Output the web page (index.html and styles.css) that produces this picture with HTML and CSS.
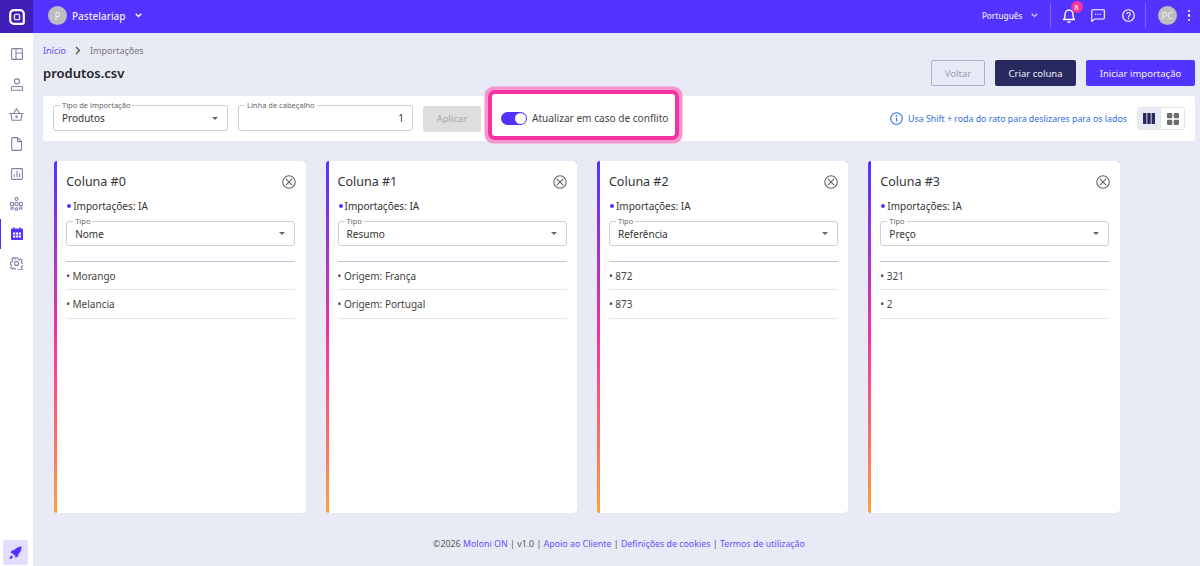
FILE: index.html
```html
<!DOCTYPE html>
<html lang="pt">
<head>
  <meta charset="UTF-8">
  <title>Importações - produtos.csv</title>
  <link rel="stylesheet" href="styles.css">
</head>
<body>
  <header class="topbar">
    <div class="logo">
      <svg width="16" height="16" viewBox="0 0 16 16" fill="none"><path d="M5 1.200h6A3.800 3.800 0 0 1 14.800 5v8.500a1.300 1.300 0 0 1-1.300 1.300H5A3.800 3.800 0 0 1 1.200 11V5A3.800 3.800 0 0 1 5 1.200z" stroke="#fff" stroke-width="2.200"/><rect x="5.400" y="5.400" width="5.200" height="5.200" rx="1.200" stroke="#e8e4ff" stroke-width="1.400"/></svg>
    </div>
    <div class="company">
      <span class="avatar">P</span>
      <span class="company-name">Pastelariap</span>
      <svg class="chev" width="7" height="5" viewBox="0 0 10 7" fill="none"><path d="M1 1l4 4 4-4" stroke="#fff" stroke-width="1.800"/></svg>
    </div>
    <div class="top-right">
      <span class="lang">Português</span>
      <svg class="chev lang-chev" width="7" height="5" viewBox="0 0 10 7" fill="none"><path d="M1 1l4 4 4-4" stroke="#e4dfff" stroke-width="1.600"/></svg>
      <span class="sep"></span>
      <span class="bell">
        <svg width="12" height="14" viewBox="2 3 12 14" fill="none" stroke="#fff" stroke-width="1.400"><path d="M2.800 13.500c1-1.200 1.200-2 1.200-4.500 0-2.800 1.700-5 4-5s4 2.200 4 5c0 2.500.2 3.300 1.200 4.500z"/><path d="M6.500 15.500c.5 1 2.500 1 3 0"/></svg>
        <span class="badge">8</span>
      </span>
      <svg class="msg" width="14" height="13" viewBox="0 0 15 14" fill="none"><path d="M1.700 .8h11.600a1 1 0 0 1 1 1v8a1 1 0 0 1-1 1H4L.8 13.300V1.800a1 1 0 0 1 .9-1z" stroke="#fff" stroke-width="1.200"/><path d="M4.500 5.800h1M7 5.800h1M9.500 5.800h1" stroke="#fff" stroke-width="1.200"/></svg>
      <svg class="help" width="13" height="13" viewBox="0 0 14 14" fill="none"><circle cx="7" cy="7" r="6.200" stroke="#fff" stroke-width="1.300"/><path d="M5.200 5.500C5.300 4.400 6 3.800 7 3.800s1.900.7 1.900 1.700c0 1.400-1.900 1.500-1.900 3" stroke="#fff" stroke-width="1.200"/><circle cx="7" cy="10.300" r=".8" fill="#fff"/></svg>
      <span class="sep sep-2"></span>
      <span class="avatar avatar-user">PC</span>
      <span class="dots"><i></i><i></i><i></i></span>
    </div>
  </header>

  <div class="shell">
    <nav class="sidebar">
      <div class="nav-list">
        <a class="nav-item"><svg width="12" height="12" viewBox="0 0 12 12" fill="none" stroke="#7d82ad" stroke-width="1.100"><rect x=".6" y=".6" width="10.800" height="10.800" rx="1"/><path d="M5 .6v10.800M5 5h6.400"/></svg></a>
        <a class="nav-item"><svg width="12" height="13" viewBox="0 0 12 13" fill="none" stroke="#7d82ad" stroke-width="1.100"><circle cx="6" cy="3.400" r="2.500"/><path d="M1.500 8.500h9a1 1 0 0 1 1 1v2.700H.5V9.500a1 1 0 0 1 1-1z"/></svg></a>
        <a class="nav-item"><svg width="15" height="13" viewBox="0 0 15 13" fill="none" stroke="#7d82ad" stroke-width="1.100"><path d="M.5 5.500h14M2 5.500l1 6.800h9l1-6.800M4.500 5.500L7.500.8l3 4.700"/><circle cx="7.500" cy="8.800" r=".7" fill="#7d82ad"/></svg></a>
        <a class="nav-item"><svg width="11" height="14" viewBox="0 0 11 14" fill="none" stroke="#7d82ad" stroke-width="1.100"><path d="M1.500.6h5l4 4v8a.8.8 0 0 1-.8.8H1.500a.8.8 0 0 1-.8-.8V1.400a.8.8 0 0 1 .8-.8zM6.500.6v4h4"/></svg></a>
        <a class="nav-item"><svg width="12" height="12" viewBox="0 0 12 12" fill="none" stroke="#7d82ad" stroke-width="1.100"><rect x=".6" y=".6" width="10.800" height="10.800" rx=".8"/><path d="M3.300 9V6.500M6 9V3M8.700 9V5.500"/></svg></a>
        <a class="nav-item"><svg width="13" height="14" viewBox="0 0 13 14" fill="none" stroke="#7d82ad" stroke-width="1.100"><circle cx="6.500" cy="2" r="1.500"/><rect x="5" y="5.500" width="3" height="3" rx=".8"/><rect x=".6" y="5.500" width="3" height="3" rx=".8"/><rect x="9.400" y="5.500" width="3" height="3" rx=".8"/><circle cx="2.200" cy="11" r="1.300"/><circle cx="6.500" cy="12" r="1.300"/><circle cx="10.800" cy="11" r="1.300"/></svg></a>
        <a class="nav-item nav-active"><svg width="12" height="13" viewBox="0 0 12 13"><path fill="#5233ff" d="M2.500 0h1v1.500h5V0h1v1.500H11a1 1 0 0 1 1 1V12a1 1 0 0 1-1 1H1a1 1 0 0 1-1-1V2.500a1 1 0 0 1 1-1h1.500z"/><path fill="#fff" d="M2 5.500h2.200v2H2zM4.900 5.500h2.200v2H4.900zM7.800 5.500H10v2H7.800zM2 8.500h2.200v2H2zM4.900 8.500h2.200v2H4.900zM7.800 8.500H10v2H7.800z"/></svg></a>
        <a class="nav-item"><svg width="13" height="13" viewBox="0 0 13 13" fill="none" stroke="#7d82ad" stroke-width="1.100"><path d="M5.400.7h2.200l.4 1.700 1.200.5 1.500-.9 1.500 1.500-.9 1.500.5 1.200 1.600.4v2.200l-1.600.4-.5 1.200.9 1.500-1.500 1.500-1.500-.9-1.200.5-.4 1.200H5.400L5 11.600l-1.200-.5-1.500.9L.8 10.500l.9-1.500-.5-1.200L.6 7.400V5.200l1.600-.4.5-1.200-.9-1.500 1.500-1.500 1.500.9L5 2z"/><circle cx="6.500" cy="6.400" r="2"/></svg></a>
      </div>
      <a class="rocket">
        <svg width="13" height="14" viewBox="0 0 13 14" fill="#5233ff"><path d="M12.500.5c.2 3.200-.8 5.700-3 7.500L9 10.500l-2.500 1.200-.3-1.700-3-2.700-1.700-.3L2.800 4.500 5.300 4C7.100 1.700 9.500.5 12.500.5z"/><path d="M2.500 9.500c-1 .4-1.700 1.500-2 3.500 2-.3 3-1 3.500-2z"/></svg>
      </a>
    </nav>

    <main class="content">
      <div class="crumbs">
        <a class="crumb-link">Início</a>
        <svg width="6" height="9" viewBox="0 0 6 9" fill="none"><path d="M1 1l3.500 3.500L1 8" stroke="#555" stroke-width="1.300"/></svg>
        <span>Importações</span>
      </div>

      <div class="title-row">
        <h1>produtos.csv</h1>
        <div class="actions">
          <button class="btn btn-back">Voltar</button>
          <button class="btn btn-dark">Criar coluna</button>
          <button class="btn btn-primary">Iniciar importação</button>
        </div>
      </div>

      <section class="toolbar">
        <div class="field field-type">
          <span class="field-label">Tipo de importação</span>
          <span class="field-value">Produtos</span>
          <span class="caret"></span>
        </div>
        <div class="field field-line">
          <span class="field-label">Linha de cabeçalho</span>
          <span class="field-value field-num">1</span>
        </div>
        <button class="btn btn-apply">Aplicar</button>
        <div class="conflict">
          <span class="toggle"><span class="knob"></span></span>
          <span>Atualizar em caso de conflito</span>
        </div>
        <div class="hint">
          <svg width="13" height="13" viewBox="0 0 13 13" fill="none"><circle cx="6.500" cy="6.500" r="5.800" stroke="#2f6fe0" stroke-width="1.100"/><path d="M6.500 5.800v3.600" stroke="#2f6fe0" stroke-width="1.200"/><circle cx="6.500" cy="3.900" r=".8" fill="#2f6fe0"/></svg>
          <span>Usa Shift + roda do rato para deslizares para os lados</span>
        </div>
        <div class="view-switch">
          <span class="view-btn view-on"><svg width="12" height="11" viewBox="0 0 12 11" fill="#27295f"><rect width="3.400" height="11" rx=".5"/><rect x="4.300" width="3.400" height="11" rx=".5"/><rect x="8.600" width="3.400" height="11" rx=".5"/></svg></span>
          <span class="view-btn"><svg width="12" height="12" viewBox="0 0 12 12" fill="#6c6c6c"><rect width="5.300" height="5.300" rx="1"/><rect x="6.700" width="5.300" height="5.300" rx="1"/><rect y="6.700" width="5.300" height="5.300" rx="1"/><rect x="6.700" y="6.700" width="5.300" height="5.300" rx="1"/></svg></span>
        </div>
      </section>

      <section class="columns">
        <article class="col-card">
          <div class="col-head"><h2>Coluna #0</h2><svg class="col-close" width="14" height="14" viewBox="0 0 14 14" fill="none" stroke="#666" stroke-width="1.100"><circle cx="7" cy="7" r="6.200"/><path d="M3.800 3.800l6.400 6.400M10.200 3.800l-6.400 6.400"/></svg></div>
          <div class="col-meta"><i class="dot"></i>Importações: IA</div>
          <div class="field field-col"><span class="field-label">Tipo</span><span class="field-value">Nome</span><span class="caret"></span></div>
          <ul class="rows"><li>• Morango</li><li>• Melancia</li></ul>
        </article>
        <article class="col-card">
          <div class="col-head"><h2>Coluna #1</h2><svg class="col-close" width="14" height="14" viewBox="0 0 14 14" fill="none" stroke="#666" stroke-width="1.100"><circle cx="7" cy="7" r="6.200"/><path d="M3.800 3.800l6.400 6.400M10.200 3.800l-6.400 6.400"/></svg></div>
          <div class="col-meta"><i class="dot"></i>Importações: IA</div>
          <div class="field field-col"><span class="field-label">Tipo</span><span class="field-value">Resumo</span><span class="caret"></span></div>
          <ul class="rows"><li>• Origem: França</li><li>• Origem: Portugal</li></ul>
        </article>
        <article class="col-card">
          <div class="col-head"><h2>Coluna #2</h2><svg class="col-close" width="14" height="14" viewBox="0 0 14 14" fill="none" stroke="#666" stroke-width="1.100"><circle cx="7" cy="7" r="6.200"/><path d="M3.800 3.800l6.400 6.400M10.200 3.800l-6.400 6.400"/></svg></div>
          <div class="col-meta"><i class="dot"></i>Importações: IA</div>
          <div class="field field-col"><span class="field-label">Tipo</span><span class="field-value">Referência</span><span class="caret"></span></div>
          <ul class="rows"><li>• 872</li><li>• 873</li></ul>
        </article>
        <article class="col-card">
          <div class="col-head"><h2>Coluna #3</h2><svg class="col-close" width="14" height="14" viewBox="0 0 14 14" fill="none" stroke="#666" stroke-width="1.100"><circle cx="7" cy="7" r="6.200"/><path d="M3.800 3.800l6.400 6.400M10.200 3.800l-6.400 6.400"/></svg></div>
          <div class="col-meta"><i class="dot"></i>Importações: IA</div>
          <div class="field field-col"><span class="field-label">Tipo</span><span class="field-value">Preço</span><span class="caret"></span></div>
          <ul class="rows"><li>• 321</li><li>• 2</li></ul>
        </article>
      </section>

      <footer class="footer">
        ©2026 <a>Moloni ON</a> | v1.0 | <a>Apoio ao Cliente</a> | <a>Definições de cookies</a> | <a>Termos de utilização</a>
      </footer>
    </main>
  </div>
</body>
</html>
```

FILE: styles.css
```css
* { box-sizing: border-box; }
html, body { height: 100%; margin: 0; padding: 0; }
body { font-family: "Noto Sans", Arial, sans-serif; font-size: 11px; color: #333; background: #e8eaf6; overflow: hidden; }

.topbar { display: flex; align-items: center; height: 33px; background: #5233ff; color: #fff; }
.logo { display: flex; align-items: center; justify-content: center; width: 33px; height: 33px; background: #3f1fb8; }
.company { display: flex; align-items: center; margin-left: 15px; padding-bottom: 2px; }
.avatar { display: flex; align-items: center; justify-content: center; width: 19px; height: 19px; border-radius: 50%; background: #bdbdbd; color: #eee; font-size: 10px; }
.company-name { margin-left: 5px; font-size: 10px; font-weight: 500; color: #f0edff; }
.company .chev { margin-left: 9px; }
.top-right { display: flex; align-items: center; margin-left: auto; height: 33px; padding-bottom: 2px; }
.lang { font-size: 8.200px; font-weight: 500; color: #e9e5ff; }
.lang-chev { margin-left: 8px; }
.sep { width: 1px; height: 25px; background: #7d66ff; margin-left: 12px; }
.bell { position: relative; display: flex; margin-left: 12px; }
.badge { position: absolute; top: -8px; left: 8px; width: 12px; height: 12px; border-radius: 50%; background: #f4339e; color: #fff; font-size: 7.500px; line-height: 12px; text-align: center; }
.msg { margin-left: 16.500px; }
.help { margin-left: 17px; }
.sep-2 { margin-left: 10px; }
.avatar-user { margin-left: 12px; width: 19px; height: 19px; font-size: 9.500px; }
.dots { display: flex; flex-direction: column; gap: 2px; margin-left: 10.500px; margin-right: 10px; }
.dots i { display: block; width: 2.500px; height: 2.500px; border-radius: 50%; background: #fff; }

.shell { display: flex; height: 533px; }
.sidebar { display: flex; flex-direction: column; width: 33px; background: #fff; }
.nav-list { display: flex; flex-direction: column; padding-top: 6.500px; }
.nav-item { display: flex; align-items: center; justify-content: center; height: 29.900px; }
.nav-active { border-left: 1px solid #5233ff; padding-right: 1px; }
.rocket { display: flex; align-items: center; justify-content: center; width: 25px; height: 25px; margin: auto 0 1px 3px; border-radius: 3px; background: #e3deff; }

.content { position: relative; flex: 1; padding: 0 5px 0 10px; }
.crumbs { display: flex; align-items: center; gap: 9px; height: 34px; font-size: 9px; color: #777; }
.crumb-link { color: #6a4dff; }
.title-row { display: flex; align-items: flex-start; justify-content: space-between; height: 29px; }
h1 { margin: 0; font-size: 13px; font-weight: 600; line-height: 11px; padding-top: 1px; color: #222; }
.actions { display: flex; gap: 10px; margin-top: -7px; }
.btn { height: 26px; padding: 0; border: 0; border-radius: 2px; font-family: inherit; font-size: 9.500px; }
.btn-back { width: 54px; background: transparent; border: 1px solid #aab0cf; color: #9a9db5; }
.btn-dark { width: 81px; background: #27295f; color: #f2f2f8; }
.btn-primary { width: 109px; background: #5233ff; color: #f2f0ff; }

.toolbar { display: flex; align-items: center; height: 45px; padding: 0 10px; background: #fff; border-radius: 2px; }
.field { position: relative; display: flex; align-items: center; height: 26px; padding: 0 8px; background: #fff; border: 1px solid #cfcfcf; border-radius: 3px; font-size: 10px; color: #333; }
.field-label { position: absolute; top: -6px; left: 6px; padding: 0 2px; background: #fff; font-size: 7.500px; line-height: 10px; color: #666; }
.field-type { width: 175px; margin-top: -1px; }
.field-line { width: 175px; margin-left: 10px; margin-top: -1px; }
.field-num { margin-left: auto; }
.caret { position: absolute; right: 9px; top: 11px; border-left: 3.500px solid transparent; border-right: 3.500px solid transparent; border-top: 3.500px solid #666; }
.btn-apply { width: 58px; margin-left: 10px; background: #dedede; color: #a9a9a9; }

.conflict { display: flex; align-items: center; gap: 5px; width: 183px; height: 42px; margin: -7px 0 0 11px; padding: 6px 0 0 9px; background: #fff; border-radius: 3px; font-size: 10.100px; color: #444; box-shadow: 0 0 0 4px #f533a0, 0 0 0 7.500px #f796cf; }
.toggle { display: flex; align-items: center; justify-content: flex-end; flex: none; width: 26px; height: 13px; padding-right: 1px; border-radius: 7px; background: #5233ff; }
.knob { width: 11px; height: 11px; border-radius: 50%; background: #fff; }

.hint { display: flex; align-items: center; gap: 5px; margin-left: auto; font-size: 8.800px; color: #2f6fe0; }
.view-switch { display: flex; margin-left: 10px; border: 1px solid #e4e4e4; border-radius: 3px; }
.view-btn { display: flex; align-items: center; justify-content: center; width: 23px; height: 21px; }
.view-on { background: #e8eaf6; border-right: 1px solid #e4e4e4; }

.columns { display: flex; gap: 20px; margin-top: 20px; padding-left: 11.200px; }
.col-card { width: 251.400px; height: 352px; padding: 0 10px 0 9px; background: #fff; border-left: 3px solid transparent; border-radius: 3px; background-image: linear-gradient(#fff, #fff), linear-gradient(#5233ff, #f533a0 50%, #ff9f3a); background-origin: border-box; background-clip: padding-box, border-box; }
.col-head { display: flex; align-items: center; justify-content: space-between; padding-top: 10px; height: 31px; }
h2 { margin: 0; font-size: 12.500px; font-weight: 400; color: #333; }
.col-close { margin-right: 0; }
.col-meta { display: flex; align-items: center; height: 14px; margin-top: 7px; font-size: 10px; color: #333; }
.dot { display: block; width: 4px; height: 4px; margin: 0 2px 0 1px; border-radius: 50%; background: #5233ff; }
.field-col { width: 229px; height: 25px; margin-top: 8px; font-size: 10px; }
.field-col .caret { top: 10px; }
.rows { margin: 15px 0 0; padding: 0; list-style: none; border-top: 1px solid #bfc3d6; width: 229px; }
.rows li { height: 28.300px; padding-top: 7px; border-bottom: 1px solid #e6e6e6; font-size: 10px; color: #444; }

.footer { position: absolute; left: 5px; right: 0; top: 505px; text-align: center; font-size: 8.850px; color: #555; }
.footer a { color: #6a4dff; }
```
